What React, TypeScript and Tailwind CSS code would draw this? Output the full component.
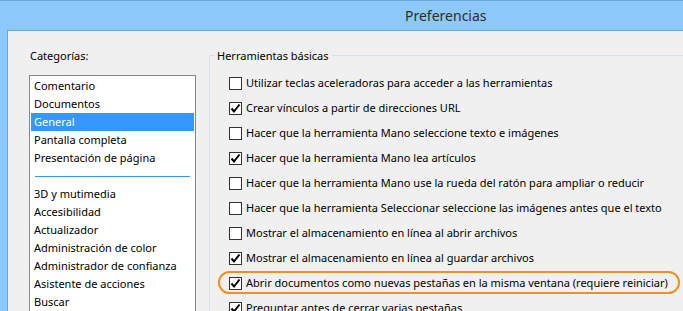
import React from "react";

const categoriesTop = ["Comentario", "Documentos", "General", "Pantalla completa", "Presentación de página"];
const categoriesBottom = [
  "3D y mutimedia",
  "Accesibilidad",
  "Actualizador",
  "Administración de color",
  "Administrador de confianza",
  "Asistente de acciones",
  "Buscar",
];

const options: { label: string; checked: boolean; highlight?: boolean }[] = [
  { label: "Utilizar teclas aceleradoras para acceder a las herramientas", checked: false },
  { label: "Crear vínculos a partir de direcciones URL", checked: true },
  { label: "Hacer que la herramienta Mano seleccione texto e imágenes", checked: false },
  { label: "Hacer que la herramienta Mano lea artículos", checked: true },
  { label: "Hacer que la herramienta Mano use la rueda del ratón para ampliar o reducir", checked: false },
  { label: "Hacer que la herramienta Seleccionar seleccione las imágenes antes que el texto", checked: false },
  { label: "Mostrar el almacenamiento en línea al abrir archivos", checked: false },
  { label: "Mostrar el almacenamiento en línea al guardar archivos", checked: true },
  { label: "Abrir documentos como nuevas pestañas en la misma ventana (requiere reiniciar)", checked: true, highlight: true },
  { label: "Preguntar antes de cerrar varias pestañas", checked: true },
];

function Checkbox({ checked }: { checked: boolean }) {
  return (
    <span className="w-[13px] h-[13px] shrink-0 border border-[#333333] bg-white flex items-center justify-center">
      {checked && (
        <svg width="11" height="11" viewBox="0 0 11 11">
          <path d="M1.5 5.5 L4 8.5 L9.5 1.5" fill="none" stroke="#000" strokeWidth="2" />
        </svg>
      )}
    </span>
  );
}

export default function App() {
  const font = { fontFamily: '"Noto Sans", "Open Sans", sans-serif' };
  return (
    <div className="w-[683px] h-[311px] overflow-hidden bg-[#8cc8f8] flex flex-col border-t border-[#6aa7dc]" style={font}>
      {/* Title bar */}
      <div className="h-[29px] shrink-0 flex items-center pl-[405px] text-[14px] text-[#2e2e2e]">Preferencias</div>

      {/* Body */}
      <div className="flex-1 ml-[7px] border-l border-t border-[#6aa7dc] bg-[#f0f0f0] flex pl-[21px] pt-[15px] text-[11px] text-black">
        {/* Categories */}
        <div className="w-[167px] shrink-0 flex flex-col">
          <div className="h-[20px] leading-[20px] pl-[1px]">Categorías:</div>
          <div className="mt-[9px] flex-1 border border-[#828790] bg-white pt-[1px] px-[1px]">
            {categoriesTop.map((c) => (
              <div
                key={c}
                className={`h-[18px] leading-[18px] pl-[3px] ${c === "General" ? "bg-[#3399ff] text-white" : ""}`}
              >
                {c}
              </div>
            ))}
            <div className="h-[18px] flex items-center px-[4px]">
              <div className="h-px w-full bg-[#3399ff]" />
            </div>
            {categoriesBottom.map((c) => (
              <div key={c} className="h-[18px] leading-[18px] pl-[3px]">
                {c}
              </div>
            ))}
          </div>
        </div>

        {/* Herramientas básicas group */}
        <div className="flex-1 ml-[13px] mt-[9px] relative border-l border-t border-[#d5dfe5] pl-[19px] pt-[15px]">
          <div className="absolute -top-[10px] left-[4px] px-[3px] bg-[#f0f0f0] h-[20px] leading-[20px]">
            Herramientas básicas
          </div>
          {options.map((o) => (
            <div key={o.label} className="relative h-[25px] flex items-center gap-[4px] whitespace-nowrap">
              {o.highlight && (
                <div className="absolute left-[-11px] top-[0px] w-[462px] h-[23px] rounded-full border-2 border-[#f0901e]" />
              )}
              <Checkbox checked={o.checked} />
              <span className="relative">{o.label}</span>
            </div>
          ))}
        </div>
      </div>
    </div>
  );
}
